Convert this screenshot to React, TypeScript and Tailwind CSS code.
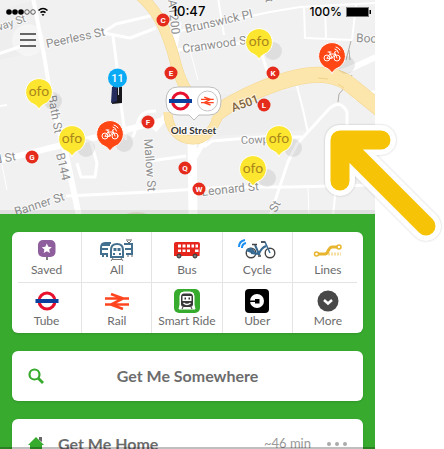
import type { ReactNode } from "react";

type Point = { x: number; y: number };

type Stop = Point & { letter: string };

type StreetLabel = Point & { text: string; angle: number; size?: number; color?: string };

type Mode = { id: string; label: string; icon: ReactNode };

const OFO_PINS: Point[] = [
  { x: 39, y: 92 },
  { x: 72, y: 139 },
  { x: 259, y: 42 },
  { x: 279, y: 139 },
  { x: 253, y: 169 },
];

const CYCLE_PINS: Point[] = [
  { x: 332, y: 56 },
  { x: 110, y: 134 },
];

const STOPS: Stop[] = [
  { letter: "C", x: 163, y: 20 },
  { letter: "E", x: 171, y: 73 },
  { letter: "K", x: 273, y: 73 },
  { letter: "L", x: 264, y: 105 },
  { letter: "F", x: 148, y: 122 },
  { letter: "G", x: 32, y: 157 },
  { letter: "Q", x: 185, y: 168 },
  { letter: "W", x: 199, y: 189 },
];

const STREETS: StreetLabel[] = [
  { text: "way St", x: -4, y: 32, angle: -19, size: 11 },
  { text: "Peerless St", x: 47, y: 48, angle: -12 },
  { text: "A1200", x: 168, y: 0, angle: 84 },
  { text: "Brunswick Pl", x: 186, y: 33, angle: -13 },
  { text: "Cranwood St", x: 183, y: 53, angle: -8 },
  { text: "St", x: 264, y: -8, angle: 80 },
  { text: "Boo", x: 356, y: 42, angle: 2 },
  { text: "Bath St", x: 48, y: 96, angle: 80 },
  { text: "B144", x: 56, y: 154, angle: 77 },
  { text: "Mallow St", x: 144, y: 139, angle: 86 },
  { text: "Banner St", x: 16, y: 216, angle: -18, size: 12 },
  { text: "d St", x: -4, y: 164, angle: -11 },
  { text: "Cowper", x: 241, y: 144, angle: -2, size: 11 },
  { text: "Leonard St", x: 202, y: 196, angle: -6, size: 12 },
  { text: "St", x: 276, y: 213, angle: -63, size: 12 },
  { text: "A501", x: 233, y: 112, angle: -20, color: "#80623f" },
];

// [path, width]
const ROADS: [string, number][] = [
  ["M33 -2 L44 55 L50 92", 4],
  ["M50 92 L65 150 L79 216", 6],
  ["M-2 54 L28 44", 3],
  ["M102 33 L116 24 L150 16 L160 12", 3],
  ["M104 33 L130 38 L156 28", 3],
  ["M113 36 L118 75 L121 105 L126 140", 3],
  ["M-2 161 L50 148 L110 134 L172 118", 6],
  ["M0 106 L7 105", 2],
  ["M178 22 L173 55", 7],
  ["M180 31 L270 12 L300 7 L376 3", 2],
  ["M176 50 L250 42", 3],
  ["M218 -2 L224 35", 2],
  ["M190 50 L198 80", 1],
  ["M258 42 L270 80", 3],
  ["M304 6 L305 38 L352 40", 2],
  ["M325 6 L326 38", 2],
  ["M352 40 L356 5", 2],
  ["M336 74 L350 69 L376 57", 6],
  ["M297 86 L303 110 L308 132", 2],
  ["M376 92 Q362 92 354 99", 3],
  ["M270 216 L288 162 L297 144 L328 110 Q340 98 347 112 L347 140", 3],
  ["M66 196 L150 192 L198 189 L228 187 L290 187 L376 185", 3],
  ["M336 186 L333 216", 2],
  ["M308 187 L309 216", 1],
  ["M133 137 L138 122 Q141 110 156 111", 3],
  ["M150 161 L186 156", 3],
  ["M192 136 L193 216", 9],
  ["M206 138 L190 166", 5],
  ["M204 147 L212 141 L262 137 L302 137", 3],
  ["M77 163 L81 177 L95 177 L97 163 L91 142", 3],
  ["M2 165 L7 190", 1],
  ["M168 114 L154 130", 6],
];

function BikeGlyph() {
  return (
    <g fill="none" stroke="#fff" strokeWidth="1" strokeLinecap="round" strokeLinejoin="round">
      <circle cx="-5" cy="2" r="3" />
      <circle cx="5" cy="2" r="3" />
      <path d="M-5 2 L-2 -2 L3 -2 L0 2 Z M0 2 L-2.500 -4 M-4 -4 H-1 M5 2 L2.500 -4 L4 -4.500" />
      <path d="M3 -7 Q6 -6.500 6.500 -3 M4 -9 Q6.500 -8.500 8 -6" />
    </g>
  );
}

function Pin({ x, y, fill, children }: Point & { fill: string; children: ReactNode }) {
  return (
    <g transform={`translate(${x} ${y})`}>
      <circle cx="14" cy="9" r="9" fill="#000" opacity=".08" />
      <path
        d="M0 18 C-1 15 -2 14 -5 12.400 A13.400 13.400 0 1 1 5 12.400 C2 14 1 15 0 18 Z"
        fill={fill}
        stroke="#fff"
        strokeWidth="1"
      />
      {children}
    </g>
  );
}

function RoundelIcon() {
  return (
    <svg width="24" height="20" viewBox="0 0 24 20">
      <circle cx="12" cy="10" r="8" fill="#fff" stroke="#e8112d" strokeWidth="3" />
      <rect x="0.500" y="8" width="23" height="4" fill="#0b3f9e" />
    </svg>
  );
}

function RailPaths() {
  return (
    <path
      d="M0 5.500 H24 M0 11.500 H24 M6 1 L18 5.500 L6 11.500 L18 16"
      fill="none"
      stroke="#ff4520"
      strokeWidth="2.600"
    />
  );
}

function LondonMap() {
  return (
    <svg
      className="block h-full w-full"
      viewBox="0 0 375 214"
      preserveAspectRatio="xMidYMid slice"
      fontFamily="Roboto, sans-serif"
      role="img"
      aria-label="Map around Old Street"
    >
      <rect width="375" height="214" fill="#f1f1f1" />
      <path d="M0 10 L34 0 L43 50 L0 60 Z M210 95 L300 90 L305 130 L215 136 Z" fill="#eeeeef" />
      <g fill="none" stroke="#fff" strokeLinejoin="round">
        {ROADS.map(([d, w]) => (
          <path key={d} d={d} strokeWidth={w} />
        ))}
      </g>
      <path d="M351 41 L346 60 M349 50 L350 60 M352 75 L346 86 L339 94 L338 102" fill="none" stroke="#b0aca6" strokeWidth="1" />

      {/* A roads and the roundabout */}
      {[
        { color: "#f3d791", extra: 1 },
        { color: "#fde6ab", extra: 0 },
      ].map(({ color, extra }) => (
        <g key={color} fill="none" stroke={color} strokeLinejoin="round">
          <path d="M136 -8 C158 10 165 28 172 50 C176 64 179 80 189 94" strokeWidth={10 + extra} />
          <path d="M168 112 C168 130 180 140 193 140 C208 140 212 129 220 114" strokeWidth={8 + extra} />
          <path d="M210 118 C230 102 262 87 290 79 C318 72 338 73 354 88 L380 109" strokeWidth={15 + extra} />
        </g>
      ))}
      <path d="M318 78 L328 79 M338 84 L344 88" stroke="#f0d28a" strokeWidth="1" />
      <path d="M174 110 H214 Q210 130 193 134 Q176 132 174 110 Z" fill="#f1f1f1" />
      <path d="M122 216 Q136 208 152 216" fill="#e2ded3" />

      {STREETS.map((s, i) => (
        <text
          key={i}
          transform={`translate(${s.x} ${s.y}) rotate(${s.angle})`}
          fontSize={s.size ?? 12}
          fontWeight={s.color ? 500 : 400}
          fill={s.color ?? "#8e8e8e"}
          stroke="#fff"
          strokeWidth="2"
          strokeOpacity=".6"
          paintOrder="stroke"
        >
          {s.text}
        </text>
      ))}

      {/* Bus stops */}
      {STOPS.map((stop) => (
        <g key={stop.letter}>
          <circle cx={stop.x} cy={stop.y} r="6.500" fill="#e52b1c" />
          <text x={stop.x} y={stop.y + 3} fontSize="8" fontWeight="700" fill="#fff" textAnchor="middle">
            {stop.letter}
          </text>
        </g>
      ))}

      {/* Docking station */}
      <path d="M113 86 L118 84 L122 87 V103 L112 104 Z" fill="#17171c" />
      <path d="M112 87 L117 86 V101 L111 103 Z" fill="#232c5c" />
      <path d="M118.500 86 V95" stroke="#d5d8de" strokeWidth="1" />
      <circle cx="117.500" cy="78" r="9.500" fill="#0aaaf5" />
      <text x="117.500" y="82" fontSize="11" fontWeight="500" fill="#fff" textAnchor="middle">
        11
      </text>

      {OFO_PINS.map((p) => (
        <Pin key={`${p.x}-${p.y}`} x={p.x} y={p.y} fill="#fde62f">
          <text y="4" fontSize="14" fontFamily="Lato, sans-serif" fill="#a9851c" textAnchor="middle">
            ofo
          </text>
        </Pin>
      ))}
      {CYCLE_PINS.map((p) => (
        <Pin key={`${p.x}-${p.y}`} x={p.x} y={p.y} fill="#ff4716">
          <BikeGlyph />
        </Pin>
      ))}

      {/* Old Street station */}
      <path
        d="M178 87 H209 Q221 87 221 101 Q221 115 209 115 H199 L194 120 L189 115 H178 Q166 115 166 101 Q166 87 178 87 Z"
        fill="#fff"
        stroke="#bdbdbd"
        strokeWidth="1"
      />
      <circle cx="180.500" cy="101" r="8" fill="#fff" stroke="#e8112d" strokeWidth="3" />
      <rect x="169" y="99" width="23" height="4" fill="#0b3f9e" />
      <circle cx="207.500" cy="101" r="10" fill="#fff" stroke="#c4c4c4" strokeWidth="1" />
      <g transform="translate(201 96.500) scale(.53)">
        <RailPaths />
      </g>
      <text
        x="193.500"
        y="134"
        fontSize="10"
        fontWeight="700"
        fontFamily="Lato, sans-serif"
        fill="#333"
        stroke="#fff"
        strokeWidth="2"
        strokeOpacity=".8"
        paintOrder="stroke"
        textAnchor="middle"
      >
        Old Street
      </text>
      <rect y="210" width="375" height="4" fill="#000" opacity=".07" />
    </svg>
  );
}

const MODES: Mode[] = [
  {
    id: "saved",
    label: "Saved",
    icon: (
      <svg width="20" height="22" viewBox="0 0 20 22">
        <path d="M10 15 V21" stroke="#555" strokeWidth="1.500" />
        <rect x="1" y="1" width="17.500" height="17" rx="5" fill="#8f5f9d" />
        <path
          d="M9.800 4.500 L11.300 7.800 L14.800 8.200 L12.200 10.500 L12.900 14 L9.800 12.200 L6.700 14 L7.400 10.500 L4.800 8.200 L8.300 7.800 Z"
          fill="#fff"
        />
      </svg>
    ),
  },
  {
    id: "all",
    label: "All",
    icon: (
      <svg width="36" height="22" viewBox="0 0 36 22" fill="none" stroke="#44708f">
        <path d="M12 4 H6 Q2 4 2 9 V15 H9 M2 10 H9 M3 6 H11" strokeWidth="2" />
        <path d="M4 15 V18 M8 15 V18" strokeWidth="2" />
        <path d="M25 5 H33 V15 H27 M26 10 H33" strokeWidth="2" />
        <path d="M27 1 H33 M28 2 L30 4 L32 2 M29 16 V18 M33 16 V18" stroke="#666" strokeWidth="1" />
        <path d="M12 18 V11 Q12 5 18 5 Q24 5 24 11 V18 Z" fill="#fff" strokeWidth="2" />
        <path d="M14.500 9 H17.500 V12 H14.500 Z M18.500 9 H21.500 V12 H18.500 Z" fill="#44708f" stroke="none" />
        <path d="M14 15 H16 M20 15 H22" strokeWidth="2" />
        <path d="M13 20.500 H23 M14 19 L12 22 M22 19 L24 22" stroke="#777" strokeWidth="1" />
      </svg>
    ),
  },
  {
    id: "bus",
    label: "Bus",
    icon: (
      <svg width="28" height="20" viewBox="0 0 28 20">
        <path d="M3 2 H25 Q27 2 27 4 L26.500 16 H1 V4 Q1 2 3 2 Z" fill="#e6251d" />
        <path
          d="M5 4.500 H8 V7.500 H5 Z M9.500 4.500 H12.500 V7.500 H9.500 Z M14 4.500 H17 V7.500 H14 Z M18.500 4.500 H21 V7.500 H18.500 Z M22.500 4.500 H25 V7.500 H22.500 Z"
          fill="#fff"
        />
        <path
          d="M5 9.500 H8 V12 H5 Z M9.500 9.500 H12.500 V12 H9.500 Z M14 9.500 H17 V12 H14 Z M22 9.500 H25.500 V12 H22 Z"
          fill="#fff"
        />
        <circle cx="6" cy="16" r="2" fill="#777" stroke="#333" strokeWidth="1" />
        <circle cx="22" cy="16" r="2" fill="#777" stroke="#333" strokeWidth="1" />
      </svg>
    ),
  },
  {
    id: "cycle",
    label: "Cycle",
    icon: (
      <svg width="40" height="22" viewBox="0 0 40 22" fill="none">
        <path d="M2 8 Q2 2 8 1 M5 9 Q5 5 9 4" stroke="#1b8ef0" strokeWidth="2" />
        <circle cx="14" cy="14" r="4.800" stroke="#444" strokeWidth="1.400" />
        <circle cx="33" cy="14" r="4.800" stroke="#444" strokeWidth="1.400" />
        <path d="M9 12 Q10 8 15 9 L19 14 L14 14 Z" fill="#396a91" />
        <path d="M14 14 L22 15 L18 6 M22 15 Q24 9 29 7" stroke="#396a91" strokeWidth="2" />
        <path d="M33 14 L28 3 H24" stroke="#396a91" strokeWidth="1.500" />
        <path d="M15 5.500 H20 M24 3 H28 M21 17 H24" stroke="#444" strokeWidth="1.400" />
      </svg>
    ),
  },
  {
    id: "lines",
    label: "Lines",
    icon: (
      <svg width="30" height="16" viewBox="0 0 30 16" fill="none" stroke="#e8b52e">
        <path d="M5 12 H12 Q14 12 15 9 Q17 5 19 5 H24" strokeWidth="3" />
        <circle cx="3.500" cy="12" r="2" fill="#fff" strokeWidth="1.500" />
        <circle cx="26" cy="5" r="2" fill="#fff" strokeWidth="1.500" />
        <path d="M15 12 H28" strokeWidth="3" strokeOpacity=".45" strokeDasharray="2 1" />
      </svg>
    ),
  },
  { id: "tube", label: "Tube", icon: <RoundelIcon /> },
  {
    id: "rail",
    label: "Rail",
    icon: (
      <svg width="24" height="17" viewBox="0 0 24 17">
        <RailPaths />
      </svg>
    ),
  },
  {
    id: "smart-ride",
    label: "Smart Ride",
    icon: (
      <svg width="26" height="24" viewBox="0 0 26 24">
        <rect width="26" height="24" rx="5" fill="#37ab2e" />
        <path
          d="M10 3 H16 Q20 3 20 7 V16 L21 20 H5 L6 16 V7 Q6 3 10 3 Z"
          fill="#fff"
          stroke="#fff"
          strokeLinejoin="round"
        />
        <path d="M10 4.500 H16 Q19 4.500 19 8 V15 Q19 18 16 18 H10 Q7 18 7 15 V8 Q7 4.500 10 4.500 Z" fill="#383838" />
        <path d="M8.500 7 H17.500 V12 H8.500 Z" fill="#fff" />
        <path d="M10.500 8.500 H12 V10.500 H10.500 Z M14.500 8.500 H16 V10.500 H14.500 Z" fill="#383838" />
        <path d="M9.500 14 Q13 17 16.500 14" fill="none" stroke="#fff" strokeWidth="1.500" />
        <path d="M9 18 L8 20 M17 18 L18 20" stroke="#383838" strokeWidth="1" />
      </svg>
    ),
  },
  {
    id: "uber",
    label: "Uber",
    icon: (
      <svg width="24" height="24" viewBox="0 0 24 24">
        <rect width="24" height="24" rx="4" fill="#000" />
        <circle cx="12" cy="12" r="7" fill="#fff" />
        <path d="M4 11.500 H10 V10 H14.500 V14.500 H10 V13 H4 Z" fill="#000" />
      </svg>
    ),
  },
  {
    id: "more",
    label: "More",
    icon: (
      <svg width="22" height="22" viewBox="0 0 22 22">
        <circle cx="11" cy="11" r="10.500" fill="#484848" />
        <path d="M7 10 L11 13.500 L15 10" fill="none" stroke="#fff" strokeWidth="2.500" />
      </svg>
    ),
  },
];

function ModeRow({ modes }: { modes: Mode[] }) {
  return (
    <div className="grid grid-cols-5 divide-x divide-[#e4e4e4]">
      {modes.map((mode) => (
        <button key={mode.id} type="button" className="flex flex-col items-center pt-1.5 pb-1">
          <span className="flex h-6 items-center justify-center">{mode.icon}</span>
          <span className="text-[12px] leading-4 whitespace-nowrap text-[#6c6c6c]">{mode.label}</span>
        </button>
      ))}
    </div>
  );
}

function StatusBar() {
  return (
    <div className="absolute inset-x-0 top-0 grid h-6 grid-cols-3 items-center pr-1 pl-1.5 font-['Inter',sans-serif] text-black">
      <svg width="43" height="10" viewBox="0 0 43 10" aria-label="Signal">
        {[3, 9, 15].map((cx) => (
          <circle key={cx} cx={cx} cy="5" r="2.800" />
        ))}
        {[21, 27].map((cx) => (
          <circle key={cx} cx={cx} cy="5" r="2.300" fill="none" stroke="#333" strokeWidth=".8" />
        ))}
        <path
          d="M32.500 3.500 Q37 -.5 41.500 3.500 M34.500 5.700 Q37 3.600 39.500 5.700"
          fill="none"
          stroke="#000"
          strokeWidth="1.600"
        />
        <path d="M35.500 7.500 Q37 6.300 38.500 7.500 L37 9 Z" />
      </svg>
      <span className="text-center text-[13px] font-medium">10:47</span>
      <span className="flex items-center justify-end gap-1 text-[12px] font-medium">
        100%
        <svg width="25" height="10" viewBox="0 0 25 10" aria-hidden="true">
          <rect x=".5" y=".5" width="22" height="9" fill="#000" stroke="#777" />
          <path d="M23.500 3 V7 H25 V3 Z" />
        </svg>
      </span>
    </div>
  );
}

function PointerArrow() {
  const shape = "M58 21 H17 V62 M17 21 L103 107";
  return (
    <svg
      className="pointer-events-none absolute top-[119px] right-0 drop-shadow-[0_0_1px_rgba(0,0,0,0.2)]"
      width="121"
      height="126"
      viewBox="0 0 121 126"
      fill="none"
      strokeLinecap="round"
      strokeLinejoin="round"
      aria-hidden="true"
    >
      <path d={shape} stroke="#fff" strokeWidth="30" />
      <path d={shape} stroke="#f6c306" strokeWidth="19" />
    </svg>
  );
}

export default function App() {
  return (
    <div className="relative h-screen overflow-hidden bg-white pr-[69px] font-['Lato',sans-serif]">
      <main className="relative h-full overflow-hidden bg-[#38ab2f]">
        <section className="relative h-[214px]">
          <LondonMap />
          <StatusBar />
          <button
            type="button"
            aria-label="Menu"
            className="absolute top-6 left-3 flex h-8 w-8 flex-col items-center justify-center gap-1 rounded-full bg-white/40"
          >
            <span className="h-0.5 w-4 bg-[#666]" />
            <span className="h-0.5 w-4 bg-[#666]" />
            <span className="h-0.5 w-4 bg-[#666]" />
          </button>
        </section>

        <div className="flex flex-col gap-[18px] px-3 pt-[18px]">
          <nav className="rounded-md bg-white shadow-sm">
            <ModeRow modes={MODES.slice(0, 5)} />
            <div className="mx-1.5 h-px bg-[#e4e4e4]" />
            <ModeRow modes={MODES.slice(5)} />
          </nav>

          <button
            type="button"
            className="relative flex h-[50px] items-center justify-center rounded-md bg-white text-[16px] font-bold text-[#6c6c6c] shadow-sm"
          >
            <svg className="absolute left-4" width="16" height="16" viewBox="0 0 16 16" fill="none" stroke="#37ab2e">
              <circle cx="6.500" cy="6.500" r="5" strokeWidth="2.200" />
              <path d="M10 10 L15 15" strokeWidth="2.800" />
            </svg>
            Get Me Somewhere
          </button>

          <div className="flex h-[50px] items-center rounded-md bg-white px-4 text-[#6c6c6c] shadow-sm">
            <button type="button" className="flex flex-1 items-center text-[16px] font-bold">
              <svg className="mr-3.5" width="16" height="18" viewBox="0 0 16 18">
                <path d="M11 2 H14 V7 L11 5 Z" fill="#666" />
                <path d="M8 2 L16 10 H14 V17 H2 V10 H0 Z" fill="#37ab2e" />
              </svg>
              Get Me Home
            </button>
            <span className="text-[13px] text-[#999]">~46 min</span>
            <button type="button" aria-label="More options" className="ml-4 flex gap-1">
              <span className="h-1 w-1 rounded-full bg-[#aaa]" />
              <span className="h-1 w-1 rounded-full bg-[#aaa]" />
              <span className="h-1 w-1 rounded-full bg-[#aaa]" />
            </button>
          </div>
        </div>
        <div className="absolute inset-x-0 bottom-0 h-0.5 bg-black/25" />
      </main>
      <PointerArrow />
    </div>
  );
}
